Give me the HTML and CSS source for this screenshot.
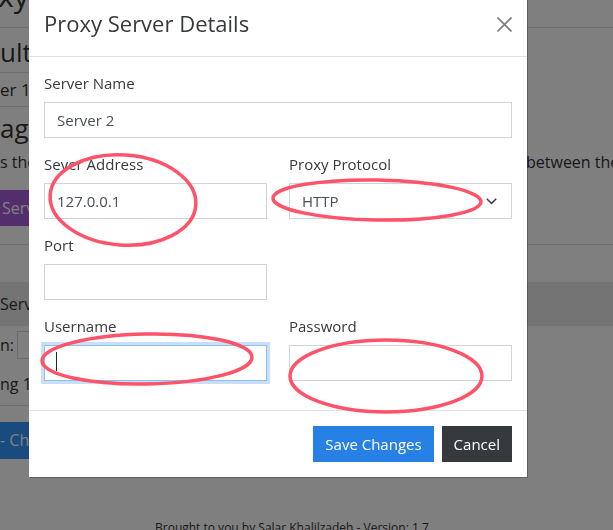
FILE: index.html
```html
<!DOCTYPE html>
<html>
	<head>
		<meta charset="utf-8" />
		<title>Proxy Server Details</title>
		<link rel="stylesheet" href="styles.css">
	</head>

	<body>
		<!-- page behind the dialog -->
		<div class="page">
			<div class="topbar"><span class="brand">xy</span></div>
			<div class="panel">
				<div class="panel-head">ult P</div>
				<div class="panel-row">er 1</div>
			</div>
			<h2 class="section">age</h2>
			<p class="lead"><span>s the</span><span>between them.</span></p>
			<div class="btn-info">Serv</div>
			<div class="divider"></div>
			<div class="band">Serve</div>
			<div class="filter"><span>n:</span><span class="filter-box"></span></div>
			<div class="info">ng 1</div>
			<div class="divider short"></div>
			<div class="btn-blue">- Cha</div>
			<div class="credit">Brought to you by Salar Khalilzadeh - Version: 1.7</div>
		</div>

		<div class="backdrop"></div>

		<div class="modal">
			<div class="modal-header">
				<h5 class="modal-title">Proxy Server Details</h5>
				<button class="close" type="button">
					<svg width="15" height="15" viewBox="0 0 15 15">
						<path d="M0.5 0.5 L14.5 14.5 M14.5 0.5 L0.5 14.5" stroke="#7d7d7d" stroke-width="1.6" fill="none" />
					</svg>
				</button>
			</div>
			<div class="modal-body">
				<div class="field wide">
					<label>Server Name</label>
					<input class="form-control" type="text" value="Server 2">
				</div>
				<div class="field">
					<label>Sever Address</label>
					<input class="form-control" type="text" value="127.0.0.1">
				</div>
				<div class="field">
					<label>Proxy Protocol</label>
					<div class="select-wrap">
						<select class="form-control">
							<option selected="selected">HTTP</option>
							<option>HTTPS</option>
							<option>SOCKS</option>
						</select>
						<svg class="chevron" width="11" height="7" viewBox="0 0 11 7">
							<path d="M0.8 0.8 L5.5 5.5 L10.2 0.8" stroke="#373a3c" stroke-width="1.5" fill="none" />
						</svg>
					</div>
				</div>
				<div class="field">
					<label>Port</label>
					<input class="form-control" type="text" value="">
				</div>
				<div class="field empty"></div>
				<div class="field">
					<label>Username</label>
					<div class="input-wrap">
						<input class="form-control focus" type="text" value="">
						<span class="caret"></span>
					</div>
				</div>
				<div class="field">
					<label>Password</label>
					<input class="form-control" type="password" value="">
				</div>
			</div>
			<div class="modal-footer">
				<button class="btn btn-primary" type="button">Save Changes</button>
				<button class="btn btn-dark" type="button">Cancel</button>
			</div>
		</div>

		<!-- red hand-drawn marks on the screenshot -->
		<svg class="marks" width="613" height="530" viewBox="0 0 613 530">
			<ellipse cx="123" cy="200" rx="73" ry="45" transform="rotate(4 123 200)" />
			<ellipse cx="377" cy="200" rx="104" ry="20" transform="rotate(1 377 200)" />
			<ellipse cx="147" cy="359" rx="105" ry="25" transform="rotate(-1 147 359)" />
			<ellipse cx="386" cy="376" rx="96" ry="36" />
		</svg>
	</body>
</html>
```

FILE: styles.css
```css
* {
	padding: 0px;
	margin: 0px;
	box-sizing: border-box;
}
body {
	width: 613px;
	height: 530px;
	overflow: hidden;
	background: #fff;
	color: #373a3c;
	font-family: "Open Sans", "Noto Sans", sans-serif;
	font-size: 15px;
}

/* page behind */
.page {
	width: 613px;
	color: #333;
}
.topbar {
	height: 28px;
	border-bottom: 1px solid #dcdcdc;
	overflow: hidden;
}
.brand {
	display: block;
	font-size: 30px;
	line-height: 30px;
	margin-top: -19px;
	margin-left: -2px;
}
.panel {
	width: 470px;
}
.panel-head {
	height: 45px;
	padding-top: 2px;
	font-size: 26px;
	line-height: 44px;
	border-bottom: 1px solid #dcdcdc;
	overflow: hidden;
}
.panel-row {
	height: 34px;
	font-size: 17px;
	line-height: 33px;
	border-bottom: 1px solid #dcdcdc;
}
.section {
	margin-top: 3px;
	font-size: 26px;
	font-weight: normal;
	line-height: 36px;
}
.lead {
	display: grid;
	grid-template-columns: 526px 1fr;
	margin-top: 4px;
	font-size: 16px;
	line-height: 24px;
	white-space: nowrap;
}
.btn-info {
	width: 200px;
	height: 36px;
	margin-top: 16px;
	padding-left: 2px;
	background: #a65ad8;
	color: #fff;
	font-size: 16px;
	line-height: 36px;
}
.divider {
	margin-top: 18px;
	border-top: 1px solid #dcdcdc;
}
.divider.short {
	width: 400px;
	margin-top: 9px;
}
.band {
	height: 44px;
	margin-top: 37px;
	background: #e8e8e8;
	font-size: 16px;
	line-height: 44px;
}
.filter {
	display: flex;
	align-items: center;
	gap: 3px;
	height: 28px;
	margin-top: 5px;
	font-size: 16px;
}
.filter-box {
	width: 200px;
	height: 28px;
	border: 1px solid #d4d4d4;
	background: #fff;
}
.info {
	margin-top: 13px;
	font-size: 16px;
	line-height: 24px;
}
.btn-blue {
	width: 200px;
	height: 37px;
	margin-top: 16px;
	background: #3296ff;
	color: #fff;
	font-size: 16px;
	line-height: 37px;
}
.credit {
	margin-top: 60px;
	padding-left: 155px;
	font-size: 12px;
	line-height: 18px;
}

.backdrop {
	position: fixed;
	top: 0;
	left: 0;
	right: 0;
	bottom: 0;
	background: rgba(0, 0, 0, 0.5);
}

/* dialog */
.modal {
	position: absolute;
	top: -10px;
	left: 29px;
	width: 498px;
	background: #fff;
	box-shadow: 1px 1px 0 rgba(0, 0, 0, 0.25);
}
.modal-header {
	display: flex;
	align-items: center;
	justify-content: space-between;
	padding: 15px;
	border-bottom: 1px solid #dee2e6;
}
.modal-title {
	font-size: 22px;
	font-weight: normal;
	line-height: 36px;
	color: #373a3c;
}
.close {
	display: block;
	width: 15px;
	height: 15px;
	margin-top: 2px;
	border: none;
	background: none;
}
.close svg {
	display: block;
}
.modal-body {
	display: grid;
	grid-template-columns: 1fr 1fr;
	gap: 15px 22px;
	padding: 15px 15px 29px;
}
.field.wide {
	grid-column: 1 / 3;
}
.field label {
	display: block;
	margin-bottom: 8px;
	line-height: 22px;
}
.form-control {
	display: block;
	width: 100%;
	height: 36px;
	padding: 0 12px;
	border: 1px solid #ced4da;
	border-radius: 0;
	background: #fff;
	color: #495057;
	font-family: inherit;
	font-size: 15px;
	caret-color: transparent;
	outline: none;
}
.form-control.focus {
	border-color: #8fc0f2;
	box-shadow: 0 0 0 3px rgba(39, 128, 227, 0.25);
}
select.form-control {
	appearance: none;
	-webkit-appearance: none;
}
.select-wrap,
.input-wrap {
	position: relative;
}
.chevron {
	position: absolute;
	right: 15px;
	top: 15px;
}
.caret {
	position: absolute;
	left: 12px;
	top: 7px;
	width: 1px;
	height: 19px;
	background: #222;
}
.modal-footer {
	display: flex;
	justify-content: flex-end;
	gap: 8px;
	padding: 15px;
	border-top: 1px solid #dee2e6;
}
.btn {
	height: 36px;
	padding: 0 12px;
	border: none;
	border-radius: 0;
	color: #fff;
	font-family: inherit;
	font-size: 15px;
}
.btn-primary {
	background: #2780e3;
}
.btn-dark {
	background: #373a3c;
}

.marks {
	position: absolute;
	top: 0;
	left: 0;
	pointer-events: none;
}
.marks ellipse {
	fill: none;
	stroke: #ff5369;
	stroke-width: 3.5;
}
```
